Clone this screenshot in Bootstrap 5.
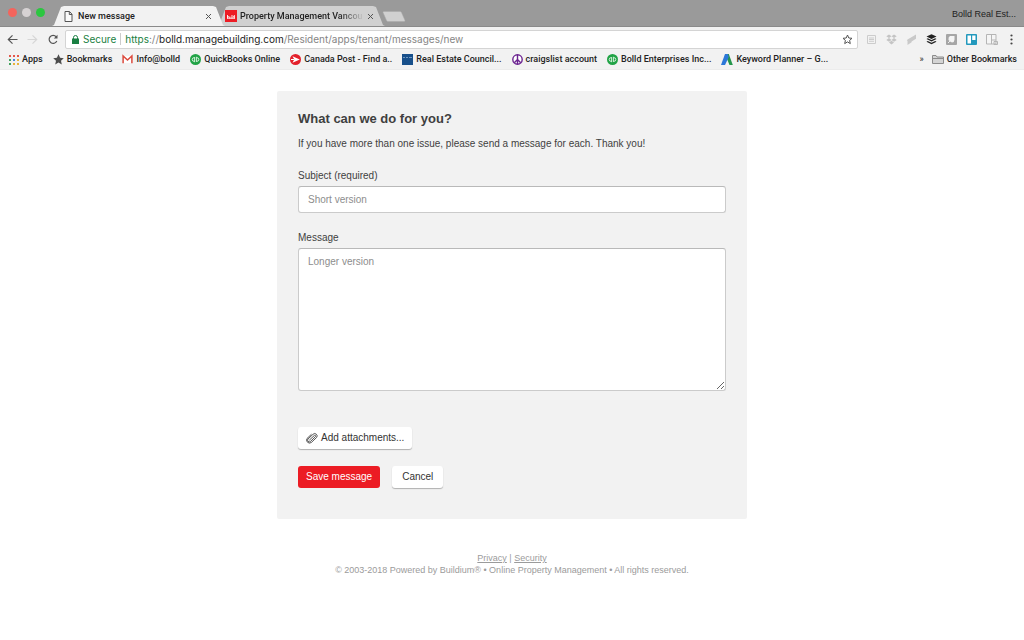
<!DOCTYPE html>
<html lang="en">
<head>
<meta charset="utf-8">
<meta name="viewport" content="width=device-width, initial-scale=1">
<title>New message</title>
<link href="https://cdn.jsdelivr.net/npm/bootstrap@5.3.0/dist/css/bootstrap.min.css" rel="stylesheet">
<style>
  body { font-family: "Liberation Sans", Arial, sans-serif; font-size: 10px; line-height: 14px; color: #3f3f3f; background: #fff; }
  svg { display: block; flex: none; }
  .browser { font-family: Roboto, Inter, sans-serif; font-size: 9px; font-weight: 500; line-height: 12px; color: #222; background: #f2f2f2; border-bottom: 1px solid #ececec; }
  .browser button { border: 0; background: none; padding: 0; color: inherit; }
  .browser a { color: inherit; }
  .strip { height: 27px; background: #9a9a9a; border-bottom: 1px solid #8a8a8a; padding-left: 8px; }
  .light { width: 9px; height: 9px; border-radius: 50%; }
  .light-close { background: #f4645c; }
  .light-minimize { background: #d6d2d3; }
  .light-zoom { background: #2bc640; }
  .lights { height: 27px; width: 44px; gap: 5px; }
  .page-tab { height: 20px; background: #f2f2f2; clip-path: polygon(0 100%, 2px 95%, 9px 5%, 12px 0, calc(100% - 12px) 0, calc(100% - 9px) 5%, calc(100% - 2px) 95%, 100% 100%); }
  .tab-current { width: 173px; padding: 0 13px 0 12px; gap: 5px; z-index: 1; }
  .tab-other { width: 168px; background: #d0d0d0; margin-left: -8px; padding: 0 11px 0 8px; gap: 3px; }
  .tab-other .tab-title { -webkit-mask-image: linear-gradient(90deg, #000 80%, transparent); mask-image: linear-gradient(90deg, #000 80%, transparent); }
  .tab-title { white-space: nowrap; }
  .new-tab { margin: 0 0 4px -3px; }
  .profile { font-family: "Liberation Sans", Arial, sans-serif; line-height: 24px; padding-right: 8px; }
  .toolbar { height: 24px; padding: 0 8px 0 7px; }
  .omnibox { height: 19px; background: #fff; border: 1px solid #d4d4d4; border-radius: 2px; padding: 0 4px 0 6px; gap: 4px; font-family: Inter, Roboto, sans-serif; font-size: 10px; font-weight: 400; }
  .url { white-space: nowrap; color: #858585; }
  .url b { font-weight: 400; color: #222; }
  .url i { font-style: normal; color: #1a7f43; }
  .secure { color: #1a7f43; padding-right: 4px; border-right: 1px solid #ccc; }
  .history { gap: 9px; padding-right: 6px; }
  .extensions { gap: 9px; padding-left: 8px; }
  .bookmarks { height: 18px; padding: 0 7px 2px 8px; }
  .bookmarks a { white-space: nowrap; gap: 3px; text-decoration: none; }
  .marks { gap: 10px; }
  .request { max-width: 470px; margin-top: 21px; padding: 20px 21px 31px; background: #f2f2f2; border-radius: 2px; }
  .request h1 { font-size: 13px; line-height: 16px; margin-bottom: 10px; font-weight: 700; }
  .request .form-label { display: block; margin-bottom: 3px; }
  .request .form-control { font-size: 10px; line-height: 15px; padding: 5px 9px; border: 1px solid #cbcbcb; border-top-color: #b9b9b9; border-radius: 3px; min-height: 0; color: #3f3f3f; }
  .request .form-control::placeholder { color: #8d8d8d; }
  .request textarea.form-control { height: 143px; }
  .field { margin-top: 18px; }
  .request .btn { font-size: 10px; line-height: 14px; padding: 4px 8px; border: 0; border-radius: 3px; }
  .request .btn-plain { background: #fff; color: #333; box-shadow: 0 1px 1px #b0b0b0; }
  .request .btn-save { background: #ec1c24; color: #fff; }
  .request .btn-cancel { padding: 4px 10px; }
  .attach { margin-top: 36px; gap: 3px; }
  .actions { margin-top: 17px; gap: 12px; }
  .footer-note { font-size: 9px; line-height: 12px; color: #9b9b9b; margin-top: 33px; }
  .footer-note a { color: inherit; }
</style>
</head>
<body>
<svg width="0" height="0" class="position-absolute" aria-hidden="true">
  <symbol id="qb" viewBox="0 0 11 11"><circle cx="5.500" cy="5.500" r="5.500" fill="#21a346"/><path d="M4.600 3.700H4a1.800 1.800 0 0 0 0 3.600h.3M4.600 3.200v5M6.400 7.300H7a1.800 1.800 0 0 0 0-3.600h-.3M6.400 7.800v-5" fill="none" stroke="#e5f6e9" stroke-width=".9"/></symbol>
</svg>

<header class="browser">
  <div class="strip d-flex align-items-end">
    <div class="lights d-flex align-items-center">
      <span class="light light-close"></span><span class="light light-minimize"></span><span class="light light-zoom"></span>
    </div>
    <div class="page-tab tab-current d-flex align-items-center">
      <svg width="9" height="11" viewBox="0 0 9 11" fill="#fafafa" stroke="#555"><path d="M1 .5h4.500L8 3.200v7.300H1zM5.300.7v2.800H8"/></svg>
      <span class="tab-title flex-grow-1">New message</span>
      <button type="button" aria-label="Close New message"><svg width="7" height="7" viewBox="0 0 7 7" stroke="#555"><path d="M1 1l5 5M6 1L1 6"/></svg></button>
    </div>
    <div class="page-tab tab-other d-flex align-items-center">
      <svg width="12" height="12" viewBox="0 0 12 12"><path fill="#ed1c24" d="M0 0h12v12H0z"/><path d="M2.500 5v3.500M4.800 6.500v2M7 5v3.500M9.300 5v3.500M2 8.200h8M2.500 6.800h1.500M8 6.800h1.500" stroke="#fff" stroke-width=".9" fill="none"/></svg>
      <span class="tab-title flex-grow-1">Property Management Vancou</span>
      <button type="button" aria-label="Close Property Management"><svg width="7" height="7" viewBox="0 0 7 7" stroke="#555"><path d="M1 1l5 5M6 1L1 6"/></svg></button>
    </div>
    <button type="button" class="new-tab" aria-label="New tab"><svg width="24" height="11" viewBox="0 0 24 11"><path d="M2 .5h16q1 0 1.500 1l3.500 8q.3 1-1 1H6q-1 0-1.500-1L1 1.500q-.3-1 1-1z" fill="#d0d0d0" stroke="#a8a8a8" stroke-width=".5"/></svg></button>
    <span class="profile ms-auto">Bolld Real Est...</span>
  </div>

  <div class="toolbar d-flex align-items-center">
    <div class="history d-flex align-items-center">
      <button type="button" aria-label="Back"><svg width="11" height="11" viewBox="0 0 11 11" fill="none" stroke="#555" stroke-width="1.200"><path d="M10.500 5.500H1.500M5.500 1.300L1.300 5.500l4.200 4.200"/></svg></button>
      <button type="button" aria-label="Forward"><svg width="11" height="11" viewBox="0 0 11 11" fill="none" stroke="#d6d6d6" stroke-width="1.200"><path d="M.5 5.500h9M5.500 1.300l4.200 4.200-4.200 4.200"/></svg></button>
      <button type="button" aria-label="Reload"><svg width="12" height="11" viewBox="0 0 12 11"><path d="M9.800 7a4 4 0 1 1-.6-4.200" fill="none" stroke="#555" stroke-width="1.200"/><path d="M10.500.8v3.700H6.800z" fill="#555"/></svg></button>
    </div>
    <div class="omnibox d-flex align-items-center flex-grow-1">
      <svg width="7" height="9" viewBox="0 0 7 9"><path d="M0 3.500h7V9H0z" fill="#1a7f43"/><path d="M1.500 4V2.500a2 2 0 0 1 4 0V4" fill="none" stroke="#1a7f43"/></svg>
      <span class="secure">Secure</span>
      <span class="url flex-grow-1"><i>https</i>://<b>bolld.managebuilding.com</b>/Resident/apps/tenant/messages/new</span>
      <button type="button" aria-label="Bookmark this page"><svg width="11" height="11" viewBox="0 0 11 11"><path d="M5.500 1l1.300 3 3.200.3-2.400 2.100.7 3.200-2.800-1.700-2.800 1.700.7-3.200L1 4.300 4.200 4z" fill="none" stroke="#555"/></svg></button>
    </div>
    <div class="extensions d-flex align-items-center">
      <svg width="11" height="11" viewBox="0 0 11 11" fill="none" stroke="#ccc"><path d="M1.500 1.500h8v8h-8zM3 4h5M3 5.500h5M3 7.300h5"/></svg>
      <svg width="11" height="11" viewBox="0 0 11 11" fill="#c4c4c4"><path d="M3 .5L5.500 2.300 3 4.100.3 2.300zM8 .5L5.500 2.300 8 4.100l2.700-1.800zM3 4.100l2.500 1.800L3 7.700.3 5.900zM8 4.100L5.500 5.900 8 7.700l2.700-1.800zM5.500 6.800L8 8.600 5.500 10.400 3 8.600z"/></svg>
      <svg width="11" height="11" viewBox="0 0 11 11" fill="#c9c9c9"><path d="M10 .5v4.200L5.600 7.500v.8L1.500 11V6.800L.8 6.500 1.500 5.500z"/></svg>
      <svg width="11" height="11" viewBox="0 0 11 11" fill="#222"><path d="M5.500.3l5 2.300-5 2.400-5-2.400zM1.800 4.300l3.700 1.800 3.700-1.800 1.300.7-5 2.500L.5 5zM1.800 6.900l3.700 1.800 3.700-1.800 1.300.8-5 2.500-5-2.500z"/></svg>
      <svg width="11" height="11" viewBox="0 0 11 11"><rect width="11" height="11" rx="1" fill="#a6a6a6"/><path d="M4 2h4.500v3.500Q8.500 8 6 8.500L4 7.500 2.500 6Q2 3 4 2z" fill="#f4f4f4"/><path d="M2 9l2-2" stroke="#eee" fill="none"/></svg>
      <svg width="11" height="11" viewBox="0 0 11 11"><rect width="11" height="11" rx="1" fill="#2399bd"/><path d="M1.500 1.500H5v8H1.500zM6.200 1.500h3.300v4.500H6.200z" fill="#fff"/></svg>
      <svg width="12" height="11" viewBox="0 0 12 11" fill="#f5f5f5" stroke="#b5b5b5"><path d="M.5.5h9.500v9.500H.5zM5.500.5v9.500M5.500 6h4.500M8 7.500h3.500v3H8z"/></svg>
      <button type="button" aria-label="Menu"><svg width="9" height="11" viewBox="0 0 9 11" fill="#444"><circle cx="4.500" cy="1.500" r="1.100"/><circle cx="4.500" cy="5.500" r="1.100"/><circle cx="4.500" cy="9.500" r="1.100"/></svg></button>
    </div>
  </div>

  <nav class="bookmarks d-flex align-items-center justify-content-between" aria-label="Bookmarks">
    <div class="marks d-flex">
      <a href="#" class="d-flex align-items-center"><svg width="11" height="11" viewBox="0 0 11 11"><path d="M1 1h2v2H1zM5 1h2v2H5zM9 1h2v2H9z" fill="#e4574b"/><path d="M1 5h2v2H1z" fill="#42a35e"/><path d="M5 5h2v2H5z" fill="#4a86e0"/><path d="M9 5h2v2H9zM5 9h2v2H5zM9 9h2v2H9z" fill="#e8b33b"/><path d="M1 9h2v2H1z" fill="#42a35e"/></svg>Apps</a>
      <a href="#" class="d-flex align-items-center"><svg width="11" height="11" viewBox="0 0 11 11"><path d="M5.500.3l1.600 3.500 3.700.4L8 6.700l.8 3.900-3.300-2-3.300 2L3 6.700.2 4.200l3.700-.4z" fill="#4d4d4d"/></svg>Bookmarks</a>
      <a href="#" class="d-flex align-items-center"><svg width="11" height="11" viewBox="0 0 11 11"><path d="M1.500 2h8v7h-8z" fill="#fff"/><path d="M1.100 9.300V2l4.400 4 4.400-4v7.300" fill="none" stroke="#dc4a3d" stroke-width="1.500"/></svg>Info@bolld</a>
      <a href="#" class="d-flex align-items-center"><svg width="11" height="11"><use href="#qb"/></svg>QuickBooks Online</a>
      <a href="#" class="d-flex align-items-center"><svg width="11" height="11" viewBox="0 0 11 11"><circle cx="5.500" cy="5.500" r="5.500" fill="#e3202b"/><path d="M2.500 2.300L9.800 5.500 2.500 8.700 4.300 5.500zM1 5h3v1H1z" fill="#fff"/></svg>Canada Post - Find a..</a>
      <a href="#" class="d-flex align-items-center"><svg width="11" height="11" viewBox="0 0 11 11"><path fill="#18508b" d="M0 0h11v11H0z"/><path d="M1 3.500h2M4 3.500h2M7 3.500h3" stroke="#6f98c2"/></svg>Real Estate Council...</a>
      <a href="#" class="d-flex align-items-center"><svg width="11" height="11" viewBox="0 0 11 11" fill="none" stroke="#6b2390" stroke-width="1.400"><circle cx="5.500" cy="5.500" r="4.700" fill="#fff"/><path d="M5.500 1v9M5.500 5.500L2.300 8.700M5.500 5.500l3.200 3.200"/></svg>craigslist account</a>
      <a href="#" class="d-flex align-items-center"><svg width="11" height="11"><use href="#qb"/></svg>Bolld Enterprises Inc...</a>
      <a href="#" class="d-flex align-items-center"><svg width="12" height="11" viewBox="0 0 12 11"><path d="M4 0h3.800l4 11H8.500z" fill="#25964c"/><path d="M4 0h2.800l1 3L4 11H0z" fill="#2d78d8"/></svg>Keyword Planner – G...</a>
    </div>
    <div class="d-flex align-items-center gap-2">
      <button type="button" aria-label="More bookmarks">»</button>
      <a href="#" class="d-flex align-items-center"><svg width="12" height="9" viewBox="0 0 12 9"><path d="M.5 8.500v-8h3.500l1 1.500h6.500v6.500zM.5 3.500h11" fill="#d4d4d4" stroke="#8c8c8c"/></svg>Other Bookmarks</a>
    </div>
  </nav>
</header>

<main class="container-fluid request">
  <h1>What can we do for you?</h1>
  <p class="mb-0">If you have more than one issue, please send a message for each. Thank you!</p>
  <form>
    <div class="field">
      <label class="form-label" for="subject">Subject (required)</label>
      <input class="form-control" id="subject" type="text" placeholder="Short version">
    </div>
    <div class="field">
      <label class="form-label" for="message">Message</label>
      <textarea class="form-control" id="message" placeholder="Longer version"></textarea>
    </div>
    <button type="button" class="btn btn-plain attach d-flex align-items-center">
      <svg width="12" height="12" viewBox="0 0 12 12" fill="none" stroke="#444" stroke-width=".9"><path d="M3.300 8.200l5-4.700a.8.8 0 0 1 1.100 1.200L4.500 9.400a1.700 1.700 0 0 1-2.400-2.500l4.800-4.500a2.400 2.400 0 0 1 3.600 3.200L5.300 10.500a3 3 0 0 1-4.300-4L5.500 2.200"/></svg>
      Add attachments...
    </button>
    <div class="actions d-flex">
      <button type="submit" class="btn btn-save">Save message</button>
      <button type="button" class="btn btn-plain btn-cancel">Cancel</button>
    </div>
  </form>
</main>

<footer class="footer-note text-center">
  <div><a href="#">Privacy</a> | <a href="#">Security</a></div>
  <div>© 2003-2018 Powered by Buildium® • Online Property Management • All rights reserved.</div>
</footer>
<script src="https://cdn.jsdelivr.net/npm/bootstrap@5.3.0/dist/js/bootstrap.bundle.min.js"></script>
</body>
</html>
